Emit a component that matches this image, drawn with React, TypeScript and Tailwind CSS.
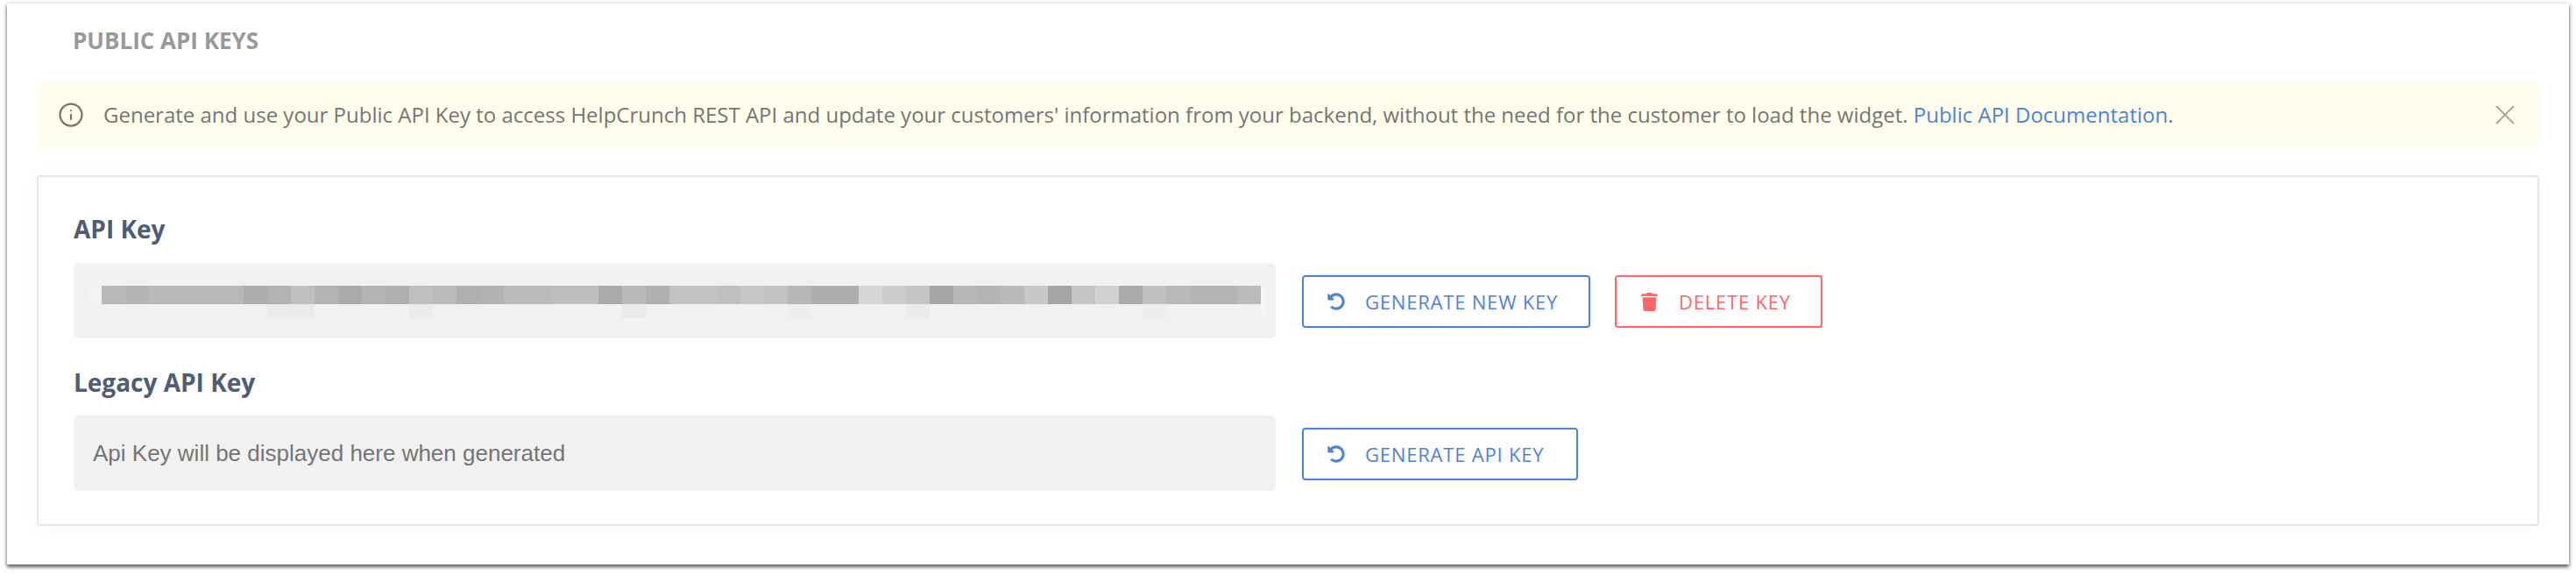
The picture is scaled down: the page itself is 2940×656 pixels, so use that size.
import React from 'react';
import { Info, X } from 'lucide-react';
import { FaTrash, FaUndoAlt } from 'react-icons/fa';

const topRow = [
  '#b9b9b9', '#b5b5b5', '#b9b9b9', '#b9b9b9', '#b8b8b8', '#b8b8b8', '#adadad', '#b3b3b3', '#c0c0c0', '#b3b3b3',
  '#aaaaaa', '#b4b4b4', '#afafaf', '#bfbfbf', '#bbbbbb', '#afafaf', '#b2b2b2', '#bcbcbc', '#bbbbbb', '#bebebe',
  '#bebebe', '#aaaaaa', '#b9b9b9', '#b0b0b0', '#c2c2c2', '#c2c2c2', '#bfbfbf', '#c6c6c6', '#c3c3c3', '#b7b7b7',
  '#aeaeae', '#aeaeae', '#d6d6d6', '#cccccc', '#c5c5c5', '#a6a6a6', '#b7b7b7', '#b4b4b4', '#bababa', '#c8c8c8',
  '#a5a5a5', '#c5c5c5', '#d0d0d0', '#aaaaaa', '#c0c0c0', '#b9b9b9', '#b4b4b4', '#b4b4b4', '#bbbbbb',
];

// faint blocks under the blurred key, by column
const lowRow: Record<number, string> = {
  7: '#ebebeb',
  8: '#ebebeb',
  13: '#ebebeb',
  22: '#eaeaea',
  29: '#eeeeee',
  34: '#ebebeb',
  44: '#eeeeee',
};

const BlurredKey = () => (
  <div className="relative ml-[32px] flex flex-col">
    <div className="absolute left-[-15px] top-0 h-[21px] w-[15px] bg-[#f3f3f3]" />
    <div className="absolute left-[1323px] top-0 h-[37px] w-[5px] bg-[#f5f5f5]" />
    <div className="flex h-[21px]">
      {topRow.map((color, i) => (
        <div key={i} className="h-full w-[27px]" style={{ backgroundColor: color }} />
      ))}
    </div>
    <div className="flex h-[16px]">
      {topRow.map((_, i) => (
        <div key={i} className="h-full w-[27px]" style={{ backgroundColor: lowRow[i] || 'transparent' }} />
      ))}
    </div>
  </div>
);

const KeyBox: React.FC<{ children: React.ReactNode }> = ({ children }) => (
  <div className="h-[86px] w-[1372px] shrink-0 rounded-[6px] bg-[#f1f1f1]">{children}</div>
);

interface OutlineButtonProps {
  label: string;
  icon: React.ReactNode;
  className: string;
}

const OutlineButton: React.FC<OutlineButtonProps> = ({ label, icon, className }) => (
  <button
    className={`flex h-[60px] items-center rounded-[4px] border-2 bg-white pl-[27px] text-[22px] tracking-[0.8px] ${className}`}
  >
    {icon}
    <span className="ml-[23px] leading-none">{label}</span>
  </button>
);

export default function App() {
  return (
    <div className="h-[656px] w-[2940px] overflow-hidden bg-white pl-[8px] pt-[4px] font-['Open_Sans',sans-serif]">
      <div className="h-[640px] w-[2924px] bg-white px-[34px] shadow-[0_3px_4px_rgba(0,0,0,0.6),0_0_5px_rgba(0,0,0,0.2)]">
        <h2 className="pl-[41px] pt-[24px] text-[26px] font-bold uppercase leading-[36px] text-[#999999]">
          Public API Keys
        </h2>

        <div className="mt-[29px] flex h-[76px] items-center justify-between rounded-[8px] bg-[#fffeed] pl-[24px] pr-[20px]">
          <div className="flex items-center">
            <Info size={30} strokeWidth={1.8} className="text-[#757575]" />
            <p className="ml-[22px] text-[24px] text-[#757575]">
              Generate and use your Public API Key to access HelpCrunch REST API and update your customers' information from your backend, without the need for the customer to load the widget.{' '}
              <a className="text-[#4d82d9]">Public API Documentation</a>.
            </p>
          </div>
          <X size={38} strokeWidth={1.2} className="text-[#a8a8a0]" />
        </div>

        <div className="mt-[31px] h-[400px] rounded-[4px] border-2 border-[#e5e5e5] bg-white pl-[40px] pt-[40px] shadow-[0_2px_24px_rgba(0,0,0,0.03)]">
          <h3 className="text-[28px] font-bold leading-[38px] text-[#4e5d73]">API Key</h3>
          <div className="mt-[20px] flex items-start">
            <KeyBox>
              <div className="pt-[26px]">
                <BlurredKey />
              </div>
            </KeyBox>
            <div className="ml-[30px] mt-[14px] flex gap-[28px]">
              <OutlineButton
                label="GENERATE NEW KEY"
                className="w-[329px] border-[#4d82d9] text-[#4d82d9]"
                icon={<FaUndoAlt size={20} />}
              />
              <OutlineButton
                label="DELETE KEY"
                className="w-[237px] border-[#ff6666] text-[#ff6666]"
                icon={<FaTrash size={21} />}
              />
            </div>
          </div>

          <h3 className="mt-[31px] text-[28px] font-bold leading-[38px] text-[#4e5d73]">Legacy API Key</h3>
          <div className="mt-[19px] flex items-start">
            <KeyBox>
              <div className="flex h-full items-center pl-[22px] font-['Liberation_Sans',sans-serif] text-[26px] text-[#757575]">
                Api Key will be displayed here when generated
              </div>
            </KeyBox>
            <div className="ml-[30px] mt-[14px]">
              <OutlineButton
                label="GENERATE API KEY"
                className="w-[315px] border-[#4d82d9] text-[#4d82d9]"
                icon={<FaUndoAlt size={20} />}
              />
            </div>
          </div>
        </div>
      </div>
    </div>
  );
}
